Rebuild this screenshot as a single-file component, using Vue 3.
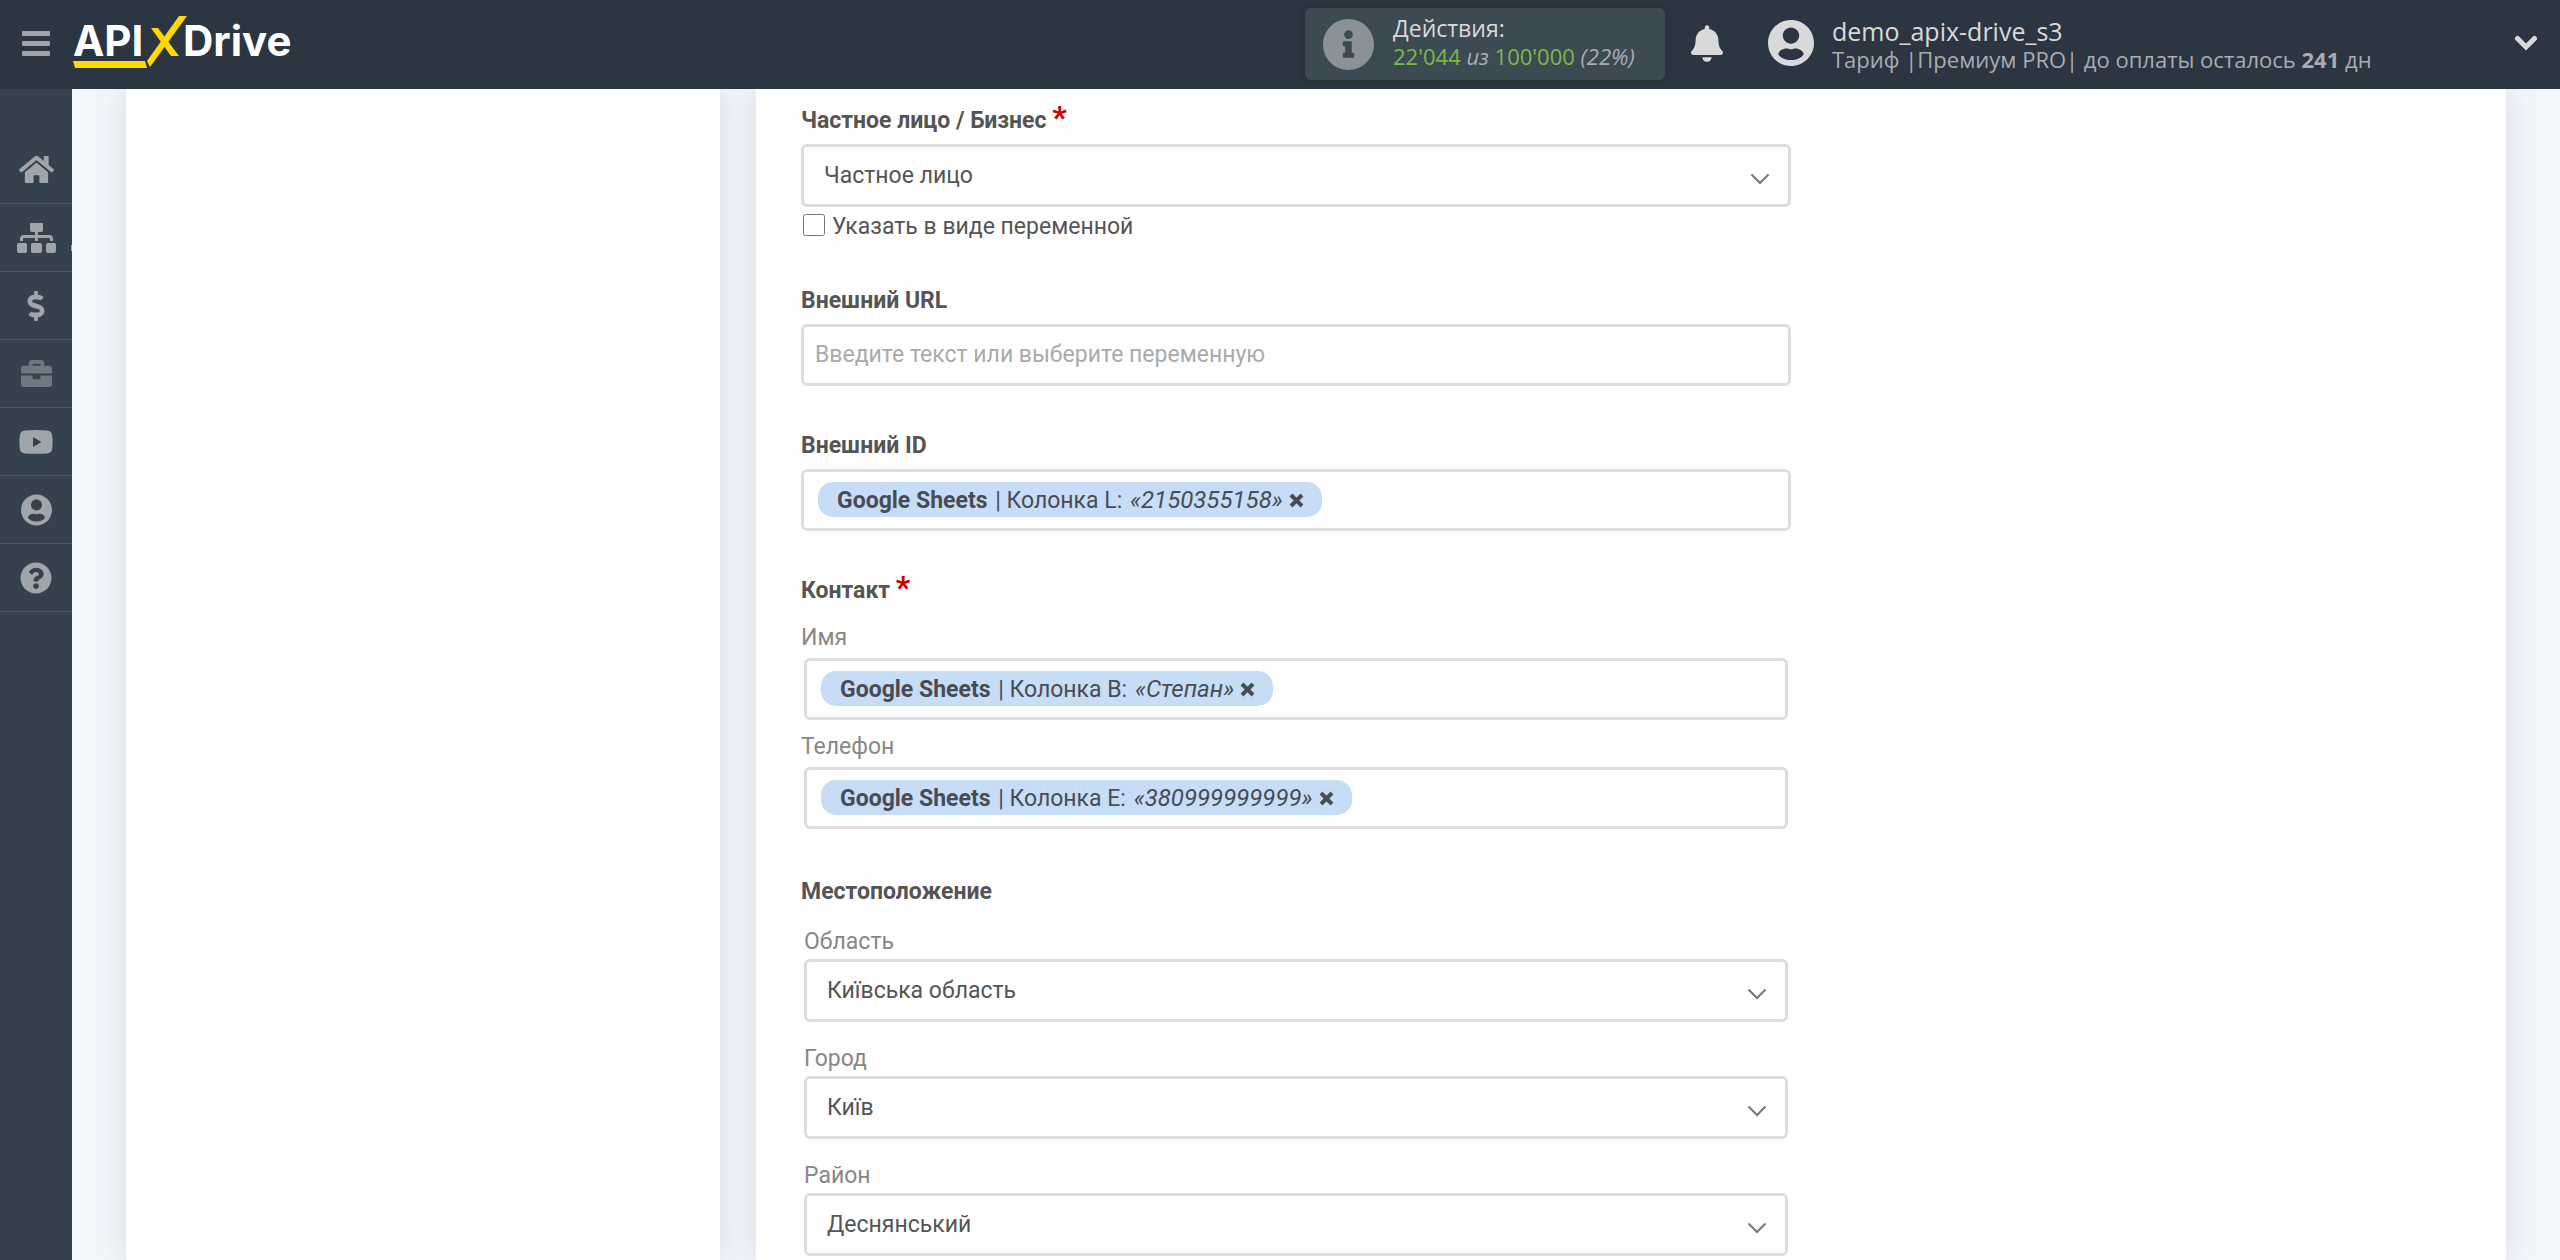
<script setup>
import { ref } from 'vue'

const nav = [
  { name: 'Главная', w: 35, h: 31, box: '0 0 576 512', d: 'M280.37 148.26L96 300.11V464a16 16 0 0 0 16 16l112.06-.29a16 16 0 0 0 15.92-16V368a16 16 0 0 1 16-16h64a16 16 0 0 1 16 16v95.64a16 16 0 0 0 16 16.05L464 480a16 16 0 0 0 16-16V300L295.67 148.26a12.19 12.19 0 0 0-15.3 0zM571.6 251.47L488 182.56V44.05a12 12 0 0 0-12-12h-56a12 12 0 0 0-12 12v72.61L318.47 43a48 48 0 0 0-61 0L4.34 251.47a12 12 0 0 0-1.6 16.9l25.5 31A12 12 0 0 0 45.15 301l235.22-193.74a12.19 12.19 0 0 1 15.3 0L530.9 301a12 12 0 0 0 16.9-1.6l25.5-31a12 12 0 0 0-1.7-16.93z' },
  { name: 'Связи', w: 39, h: 30, box: '0 0 39 30', d: 'M14 0h11q1 0 1 1v6q0 2-2 2h-3v3h11q4 0 4 4v2h-3v-2q0-1-1-1H21v3h-3v-3H7q-1 0-1 1v2H3v-2q0-4 4-4h11V9h-3q-2 0-2-2V1q0-1 1-1zM2 20h6q2 0 2 2v6q0 2-2 2H2q-2 0-2-2v-6q0-2 2-2zM16 20h7q2 0 2 2v6q0 2-2 2h-7q-2 0-2-2v-6q0-2 2-2zM31 20h6q2 0 2 2v6q0 2-2 2h-6q-2 0-2-2v-6q0-2 2-2z', mark: true },
  { name: 'Финансы', w: 18, h: 30, box: '0 0 288 512', d: 'M209.2 233.4l-108-31.6C88.7 198.2 80 186.5 80 173.5c0-16.3 13.2-29.5 29.5-29.5h66.3c12.2 0 24.2 3.7 34.2 10.5 6.1 4.1 14.3 3.1 19.5-2l34.8-34c7.1-6.9 6.1-18.4-1.8-24.5C238 74.8 207.4 64.1 176 64V16c0-8.8-7.2-16-16-16h-32c-8.8 0-16 7.2-16 16v48h-2.5C45.8 64-5.4 118.7.5 183.6c4.2 46.1 39.4 83.6 83.8 96.6l102.5 30c12.5 3.7 21.2 15.3 21.2 28.3 0 16.3-13.2 29.5-29.5 29.5h-66.3C100 368 88 364.3 78 357.5c-6.1-4.1-14.3-3.1-19.5 2l-34.8 34c-7.1 6.9-6.1 18.4 1.8 24.5 24.5 19.2 55.1 29.9 86.5 30v48c0 8.8 7.2 16 16 16h32c8.8 0 16-7.2 16-16v-48.2c46.6-.9 90.3-28.6 105.7-72.7 21.5-61.6-14.6-124.8-72.5-141.7z' },
  { name: 'Кейсы', w: 31, h: 31, box: '0 0 512 512', dim: true, d: 'M320 336c0 8.84-7.16 16-16 16h-96c-8.84 0-16-7.16-16-16v-48H0v144c0 25.6 22.4 48 48 48h416c25.6 0 48-22.4 48-48V288H320v48zm144-208h-80V80c0-25.6-22.4-48-48-48H176c-25.6 0-48 22.4-48 48v48H48c-25.6 0-48 22.4-48 48v80h512v-80c0-25.6-22.4-48-48-48zm-144 0H192V96h128v32z' },
  { name: 'Видео', w: 34, h: 24, box: '0 0 34 24', d: 'M6 .6Q17-.6 28 .6q4.600.4 5.200 5 .8 6.400 0 12.800-.6 4.600-5.200 5-11 .9-22 0-4.600-.4-5.200-5Q0 12 .8 5.600 1.400 1 6 .6zM14 7v10l8.500-5z' },
  { name: 'Профиль', w: 31, h: 32, box: '0 0 496 512', d: 'M248 8C111 8 0 119 0 256s111 248 248 248 248-111 248-248S385 8 248 8zm0 80c48.600 0 88 39.400 88 88s-39.400 88-88 88-88-39.400-88-88 39.400-88 88-88zm0 350c-62 0-112-20-138-62 12-36 48-60 90-60 16 0 28 8 48 8s32-8 48-8c42 0 78 24 90 60-26 42-76 62-138 62z' },
  { name: 'Помощь', w: 32, h: 32, box: '0 0 512 512', d: 'M504 256c0 136.997-111.043 248-248 248S8 392.997 8 256C8 119.083 119.043 8 256 8s248 111.083 248 248zM262.655 90c-54.497 0-89.255 22.957-116.549 63.758-3.536 5.286-2.353 12.415 2.715 16.258l34.699 26.310c5.205 3.947 12.621 3.008 16.665-2.122 17.864-22.658 30.113-35.797 57.303-35.797 20.429 0 45.698 13.148 45.698 32.958 0 14.976-12.363 22.667-32.534 33.976C247.128 238.528 216 254.941 216 296v4c0 6.627 5.373 12 12 12h56c6.627 0 12-5.373 12-12v-1.333c0-28.462 83.186-29.647 83.186-106.667 0-58.002-60.165-102-116.531-102zM256 338c-25.365 0-46 20.635-46 46 0 25.364 20.635 46 46 46s46-20.636 46-46c0-25.364-20.635-46-46-46z' },
]

const kind = ref('Частное лицо')
const asVariable = ref(false)
const url = ref('')

const externalId = { column: 'L', value: '2150355158' }
const contacts = [
  { id: 'name', label: 'Имя', column: 'B', value: 'Степан' },
  { id: 'phone', label: 'Телефон', column: 'E', value: '380999999999' },
]
const places = [
  { id: 'region', label: 'Область', value: 'Київська область' },
  { id: 'city', label: 'Город', value: 'Київ' },
  { id: 'district', label: 'Район', value: 'Деснянський' },
]
</script>

<template>
  <div class="page">
    <header class="header">
      <button class="icon-button burger" aria-label="Меню">
        <span></span><span></span><span></span>
      </button>
      <a class="logo" href="#" aria-label="APIXDrive">
        <svg width="224" height="62" viewBox="0 0 224 62">
          <text x="0" y="44">API</text>
          <text x="110" y="44">Drive</text>
          <path fill="#ffd900" d="M106 4h8L77 55l-3-6zM78 16h7l21 28h-8zM0 49h72l2 7H2z" />
        </svg>
      </a>
      <div class="usage">
        <svg class="usage-icon" viewBox="8 8 496 496"><path d="M256 8C119.043 8 8 119.083 8 256c0 136.997 111.043 248 248 248s248-111.003 248-248C504 119.083 392.957 8 256 8zm0 110c23.196 0 42 18.804 42 42s-18.804 42-42 42-42-18.804-42-42 18.804-42 42-42zm56 254c0 6.627-5.373 12-12 12h-88c-6.627 0-12-5.373-12-12v-24c0-6.627 5.373-12 12-12h12v-64h-12c-6.627 0-12-5.373-12-12v-24c0-6.627 5.373-12 12-12h64c6.627 0 12 5.373 12 12v100h12c6.627 0 12 5.373 12 12v24z" /></svg>
        <div class="usage-text">
          <div class="title">Действия:</div>
          <div class="sub"><span class="green">22'044</span> <i>из</i> <span class="green">100'000</span> <i>(22%)</i></div>
        </div>
      </div>
      <button class="icon-button bell" aria-label="Уведомления">
        <svg width="32" height="37" viewBox="0 0 448 512"><path d="M224 512c35.320 0 63.970-28.650 63.970-64H160.030c0 35.350 28.650 64 63.970 64zm215.390-149.710c-19.320-20.760-55.470-51.990-55.470-154.290 0-77.700-54.480-139.900-127.940-155.160V32c0-17.670-14.320-32-31.980-32s-31.980 14.330-31.980 32v20.840C118.560 68.100 64.080 130.300 64.080 208c0 102.300-36.150 133.530-55.470 154.290-6 6.450-8.660 14.160-8.610 21.710.11 16.400 12.980 32 32.100 32h383.800c19.120 0 32-15.600 32.100-32 .05-7.550-2.610-15.270-8.610-21.710z" /></svg>
      </button>
      <button class="account">
        <svg width="46" height="46" viewBox="0 8 496 496"><path :d="nav[5].d" /></svg>
        <span class="account-text">
          <span class="title login">demo_apix-drive_s3</span>
          <span class="sub">Тариф |Премиум PRO| до оплаты осталось <b>241</b> дн</span>
        </span>
        <svg class="account-arrow" width="24" height="16" viewBox="0 0 24 16"><path d="M3.500 3.500L12 12l8.500-8.500" /></svg>
      </button>
    </header>

    <div class="body">
      <nav class="sidebar">
        <a v-for="item in nav" :key="item.name" href="#" class="nav-item" :class="{ dim: item.dim, mark: item.mark }" :aria-label="item.name">
          <svg :width="item.w" :height="item.h" :viewBox="item.box"><path fill-rule="evenodd" :d="item.d" /></svg>
        </a>
      </nav>

      <main class="main">
        <aside class="card"></aside>
        <section class="card content">
          <form class="form" @submit.prevent>
            <div class="group">
              <label class="heading" for="kind">Частное лицо / Бизнес <span class="required">*</span></label>
              <div class="select">
                <select id="kind" v-model="kind"><option>Частное лицо</option></select>
                <svg width="20" height="12" viewBox="0 0 20 12"><path d="M1.500 1.500L10 10l8.500-8.500" /></svg>
              </div>
              <label class="check"><input v-model="asVariable" type="checkbox" />Указать в виде переменной</label>
            </div>

            <div class="group">
              <label class="heading" for="url">Внешний URL</label>
              <input id="url" v-model="url" class="field" type="text" placeholder="Введите текст или выберите переменную" />
            </div>

            <div class="group">
              <label class="heading" for="ext">Внешний ID</label>
              <div class="field">
                <span class="chip"><b>Google Sheets</b> | Колонка {{ externalId.column }}: <i>«{{ externalId.value }}»</i><button class="remove" aria-label="Удалить"><svg width="15" height="15" viewBox="0 0 15 15"><path d="M2 2l11 11M13 2L2 13" /></svg></button></span>
                <input id="ext" type="text" />
              </div>
            </div>

            <fieldset class="group">
              <legend class="heading">Контакт <span class="required">*</span></legend>
              <div class="contacts">
                <div v-for="c in contacts" :key="c.id">
                  <label class="label" :for="c.id">{{ c.label }}</label>
                  <div class="field inset">
                    <span class="chip"><b>Google Sheets</b> | Колонка {{ c.column }}: <i>«{{ c.value }}»</i><button class="remove" aria-label="Удалить"><svg width="15" height="15" viewBox="0 0 15 15"><path d="M2 2l11 11M13 2L2 13" /></svg></button></span>
                    <input :id="c.id" type="text" />
                  </div>
                </div>
              </div>
            </fieldset>

            <fieldset class="group">
              <legend class="heading">Местоположение</legend>
              <div class="places">
                <div v-for="p in places" :key="p.id">
                  <label class="label" :for="p.id">{{ p.label }}</label>
                  <div class="select">
                    <select :id="p.id"><option>{{ p.value }}</option></select>
                    <svg width="20" height="12" viewBox="0 0 20 12"><path d="M1.500 1.500L10 10l8.500-8.500" /></svg>
                  </div>
                </div>
              </div>
            </fieldset>
          </form>
        </section>
      </main>
    </div>
  </div>
</template>

<style>
body {
  background: #f3f6fb;
}
</style>

<style scoped>
*,
*::before,
*::after {
  box-sizing: border-box;
}

.page {
  display: flex;
  flex-direction: column;
  min-height: 100vh;
  font-family: Roboto, sans-serif;
  font-size: 23px;
  line-height: 30px;
  color: #555;
}

svg {
  display: block;
  flex: none;
  fill: currentColor;
}

button,
input,
select {
  font: inherit;
  color: inherit;
  margin: 0;
}

button {
  padding: 0;
  border: 0;
  background: none;
  cursor: pointer;
}

.header {
  display: flex;
  align-items: center;
  height: 89px;
  padding: 0 22px 3px;
  background: #2b3642;
  color: #d9d9d9;
  font-family: "Open Sans", sans-serif;
}

.burger {
  display: grid;
  gap: 5px;
  width: 28px;
  margin-right: 23px;
}

.burger span {
  height: 5px;
  border-radius: 1px;
  background: #9fa4a9;
}

.logo {
  flex: 1;
  color: #fff;
}

.logo text {
  font: 700 42px Inter, sans-serif;
}

.usage {
  display: flex;
  align-items: center;
  gap: 19px;
  width: 360px;
  height: 72px;
  margin-top: 2px;
  padding-left: 18px;
  border-radius: 6px;
  background: #3c4a53;
  box-shadow: 0 0 8px rgba(0, 0, 0, 0.2);
}

.usage-icon {
  width: 51px;
  height: 51px;
  color: #8a9197;
}

.usage-text {
  padding-bottom: 4px;
}

.title,
.sub {
  display: block;
  line-height: 28px;
  white-space: nowrap;
}

.title {
  font-size: 23px;
}

.login {
  font-size: 25px;
}

.sub {
  font-size: 22px;
  color: #a9adb2;
}

.green {
  color: #7cb849;
}

.bell {
  margin: 0 45px 0 26px;
}

.account {
  display: flex;
  align-items: center;
  gap: 18px;
  width: 770px;
  text-align: left;
}

.account-text {
  padding-top: 4px;
}

.account-arrow {
  margin-left: auto;
  fill: none;
  stroke: currentColor;
  stroke-width: 5;
  stroke-linecap: round;
}

.body {
  display: flex;
  flex: 1;
}

.sidebar {
  display: flex;
  flex-direction: column;
  flex: none;
  width: 72px;
  padding-top: 47px;
  background: #36414e;
}

.nav-item {
  position: relative;
  display: flex;
  align-items: center;
  justify-content: center;
  height: 68px;
  border-bottom: 1px solid #4a5662;
  color: #a0a5a9;
}

.dim {
  color: #6f7781;
}

.mark::after {
  content: "";
  position: absolute;
  right: 0;
  bottom: 20px;
  width: 1px;
  height: 6px;
  background: #a0a5a9;
}

.main {
  display: grid;
  grid-template-columns: 594fr 1750fr;
  gap: 36px;
  flex: 1;
  min-width: 0;
  padding: 0 54px;
}

.card {
  background: #fefefe;
  box-shadow: 0 0 30px rgba(90, 97, 105, 0.18);
  clip-path: inset(0 -36px);
}

.content {
  display: grid;
  grid-template-columns: 3fr 2fr;
  column-gap: 10px;
  padding: 16px 45px 3px;
}

.form {
  display: grid;
  align-content: start;
  gap: 44px;
  min-width: 0;
}

.group {
  min-width: 0;
  margin: 0;
  padding: 0;
  border: 0;
}

.heading {
  display: block;
  height: 30px;
  margin-bottom: 9px;
  padding: 0;
  font-weight: 700;
  line-height: 32px;
}

.required {
  color: #c00;
  font-size: 32px;
  line-height: 20px;
}

.label {
  display: block;
  height: 30px;
  color: #888;
  line-height: 32px;
}

.select {
  position: relative;
}

.select select {
  display: block;
  width: 100%;
  height: 63px;
  padding: 0 60px 0 20px;
  border: 3px solid #ddd;
  border-radius: 6px;
  background: #fefefe;
  appearance: none;
}

.select svg {
  position: absolute;
  top: 29px;
  right: 21px;
  fill: none;
  stroke: #777;
  stroke-width: 2;
  pointer-events: none;
}

.check {
  display: flex;
  align-items: center;
  gap: 7px;
  height: 34px;
  padding: 6px 0 0 2px;
}

.check input {
  width: 22px;
  height: 22px;
  margin-bottom: 4px;
}

.field {
  display: flex;
  align-items: center;
  width: 100%;
  height: 62px;
  padding: 0 11px 1px;
  border: 3px solid #ddd;
  border-radius: 6px;
  background: #fefefe;
}

.field::placeholder {
  color: #aaa;
  opacity: 1;
}

.field input {
  flex: 1;
  min-width: 0;
  border: 0;
  background: none;
  outline: none;
}

div.field {
  padding: 0 14px 1px;
}

.chip {
  display: block;
  height: 35px;
  padding: 0 18px 0 19px;
  border-radius: 15px;
  background: #c7ddf5;
  color: #484c55;
  line-height: 36px;
  white-space: nowrap;
}

.chip b {
  margin-right: 2px;
}

.chip i {
  margin-left: 2px;
  font-size: 24px;
}

.remove {
  display: inline-block;
  margin-left: 6px;
}

.remove svg {
  fill: none;
  stroke: currentColor;
  stroke-width: 4;
}

.contacts {
  display: grid;
  gap: 11px;
  padding: 8px 0 3px;
}

.inset {
  width: auto;
  margin: 6px 3px 0;
}

.places {
  display: grid;
  gap: 21px;
  padding: 11px 3px 0;
}

.places .label {
  margin-bottom: 3px;
}
</style>
